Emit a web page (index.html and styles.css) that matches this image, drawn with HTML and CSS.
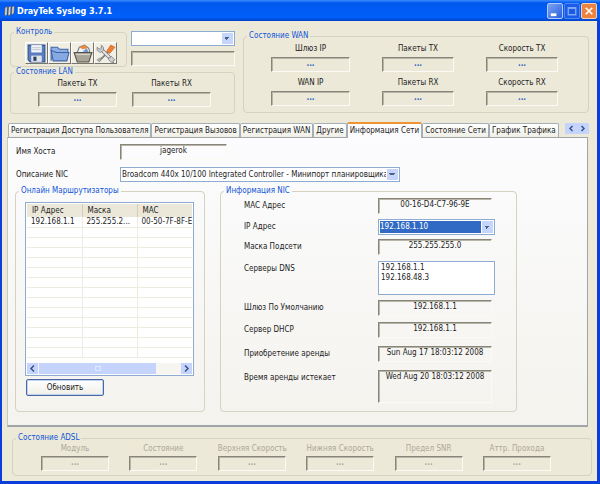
FILE: index.html
```html
<!DOCTYPE html>
<html lang="ru">
<head>
<meta charset="utf-8">
<title>DrayTek Syslog 3.7.1</title>
<link rel="stylesheet" href="styles.css">
</head>
<body>
<div class="window">
  <header class="titlebar">
    <svg class="app-icon" viewBox="0 0 11 12"><path d="M1 2.500l2.500-1L3 10l-2 1-.5-2zM4.500 2l2.500-1-.5 8.500-2 1.500-.5-2zM8 1.500l2.500-.5-.5 7-2 2-.5-2z" fill="#d6d0c2" stroke="#34405c" stroke-width=".5"/></svg>
    <h1>DrayTek Syslog 3.7.1</h1>
    <div class="caption-buttons">
      <button class="cap" aria-label="Свернуть"><svg viewBox="0 0 15 15"><path d="M3 10h6v3H3z" fill="#fff"/></svg></button>
      <button class="cap cap-off" aria-label="Развернуть" disabled><svg viewBox="0 0 15 15"><path d="M3.500 4h8v7.500h-8zM3 4.500h9" fill="none" stroke="#7fa8f2" stroke-width="1.500"/></svg></button>
      <button class="cap cap-close" aria-label="Закрыть"><svg viewBox="0 0 15 15"><path d="M4 4l7 7M11 4l-7 7" stroke="#fff" stroke-width="1.800"/></svg></button>
    </div>
  </header>

  <main class="client">
    <section class="top">
      <div class="top-left">
        <div class="control-row">
          <fieldset class="control">
            <legend>Контроль</legend>
            <div class="tools">
              <button aria-label="Сохранить"><svg viewBox="0 0 20 20"><path d="M2 2h16v16H4l-2-2z" fill="#5b7dc0" stroke="#31508f"/><path d="M5 2h10v7H5z" fill="#f4f6fa"/><path d="M6 4.500h8M6 6.500h8" stroke="#b9c2d2"/><path d="M5 12h10v6H5z" fill="#dfe3ea"/><path d="M7 13h3v4H7z" fill="#2d3f66"/></svg></button>
              <button aria-label="Открыть"><svg viewBox="0 0 20 20"><path d="M2 17V4h6l2 2h8v3" fill="#8fb0e6" stroke="#3d62a8"/><path d="M4 17L2 7l5 2h12l-2 8z" fill="#86a9e2" stroke="#3d62a8"/></svg></button>
              <button aria-label="Корзина"><svg viewBox="0 0 20 20"><path d="M5 9l2-5 5-2 4 3 1 4z" fill="#f2f5fb" stroke="#777"/><path d="M7 4l5-2 3 3-5 1z" fill="#ee8b3c"/><path d="M10 8l4-3 2 4z" fill="#6f94d8"/><path d="M2 9h17l-3 9H5z" fill="#a8a498" stroke="#55524a"/><path d="M4 11h13" stroke="#d8d5cb"/></svg></button>
              <button aria-label="Настройки"><svg viewBox="0 0 20 20"><path d="M4 17L13 8" stroke="#77777a" stroke-width="1.500"/><path d="M11 8l4-6 4 2-5 6z" fill="#ee7f35" stroke="#c6601f" stroke-width=".6"/><path d="M5 5l10 10" stroke="#77777a" stroke-width="3.500"/><path d="M5 5l10 10" stroke="#e4e4e4" stroke-width="2"/><path d="M2 4v3l3 2 3-2V4L6 2v3L5 6 3 5z" fill="#d0d0d2" stroke="#77777a" stroke-width=".7"/><path d="M13 14l3-1 3 3-2 1 1 2-3-1-2-2z" fill="#d0d0d2" stroke="#77777a" stroke-width=".7"/><path d="M2 16l3-2 1 1-2 3z" fill="#bbb" stroke="#666" stroke-width=".5"/></svg></button>
            </div>
          </fieldset>
          <div class="device">
            <select class="combo" aria-label="Устройство"><option></option></select>
            <output class="inset" aria-label="Адрес устройства"></output>
          </div>
        </div>
        <fieldset class="lan">
          <legend>Состояние LAN</legend>
          <div class="meters lan-meters">
            <div class="meter"><span>Пакеты TX</span><output class="inset">...</output></div>
            <div class="meter"><span>Пакеты RX</span><output class="inset">...</output></div>
          </div>
        </fieldset>
      </div>
      <fieldset class="wan">
        <legend>Состояние WAN</legend>
        <div class="meters wan-meters">
          <div class="meter"><span>Шлюз IP</span><output class="inset">...</output></div>
          <div class="meter"><span>Пакеты TX</span><output class="inset">...</output></div>
          <div class="meter"><span>Скорость TX</span><output class="inset">...</output></div>
          <div class="meter"><span>WAN IP</span><output class="inset">...</output></div>
          <div class="meter"><span>Пакеты RX</span><output class="inset">...</output></div>
          <div class="meter"><span>Скорость RX</span><output class="inset">...</output></div>
        </div>
      </fieldset>
    </section>

    <nav class="tabs">
      <button class="tab">Регистрация Доступа Пользователя</button>
      <button class="tab">Регистрация Вызовов</button>
      <button class="tab">Регистрация WAN</button>
      <button class="tab">Другие</button>
      <button class="tab active">Информация Сети</button>
      <button class="tab">Состояние Сети</button>
      <button class="tab">График Трафика</button>
      <div class="tab-scroll">
        <button aria-label="Назад"><svg viewBox="0 0 12 11"><path d="M7.500 3L5 5.500 7.500 8" /></svg></button>
        <button aria-label="Вперёд"><svg viewBox="0 0 12 11"><path d="M4.500 3L7 5.500 4.500 8" /></svg></button>
      </div>
    </nav>

    <section class="page">
      <div class="form">
        <label for="host">Имя Хоста</label>
        <output id="host" class="inset host">jagerok</output>
        <label for="nic">Описание NIC</label>
        <select id="nic" class="combo nic"><option>Broadcom 440x 10/100 Integrated Controller - Минипорт планировщика пакетов</option></select>
      </div>
      <div class="panels">
        <fieldset class="routers">
          <legend>Онлайн Маршрутизаторы</legend>
          <div class="list">
            <table>
              <thead><tr><th>IP Адрес</th><th>Маска</th><th>MAC</th></tr></thead>
              <tbody>
                <tr><td>192.168.1.1</td><td>255.255.2...</td><td>00-50-7F-8F-E</td></tr>
                <tr><td></td><td></td><td></td></tr><tr><td></td><td></td><td></td></tr>
                <tr><td></td><td></td><td></td></tr><tr><td></td><td></td><td></td></tr>
                <tr><td></td><td></td><td></td></tr><tr><td></td><td></td><td></td></tr>
                <tr><td></td><td></td><td></td></tr><tr><td></td><td></td><td></td></tr>
                <tr><td></td><td></td><td></td></tr><tr><td></td><td></td><td></td></tr>
                <tr><td></td><td></td><td></td></tr><tr><td></td><td></td><td></td></tr>
                <tr><td></td><td></td><td></td></tr>
              </tbody>
            </table>
            <div class="scrollbar">
              <button aria-label="Влево"><svg viewBox="0 0 11 11"><path d="M7 2.500L4 5.500l3 3"/></svg></button>
              <div class="track"><div class="thumb"><i></i></div></div>
              <button aria-label="Вправо"><svg viewBox="0 0 11 11"><path d="M4 2.500l3 3-3 3"/></svg></button>
            </div>
          </div>
          <button class="refresh">Обновить</button>
        </fieldset>
        <fieldset class="info">
          <legend>Информация NIC</legend>
          <div class="info-grid">
            <label for="mac">MAC Адрес</label><output id="mac" class="inset">00-16-D4-C7-96-9E</output>
            <label for="ip">IP Адрес</label><select id="ip" class="combo picked"><option>192.168.1.10</option></select>
            <label for="mask">Маска Подсети</label><output id="mask" class="inset">255.255.255.0</output>
            <label for="dns">Серверы DNS</label><textarea id="dns" readonly>192.168.1.1
192.168.48.3</textarea>
            <label for="gw">Шлюз По Умолчанию</label><output id="gw" class="inset">192.168.1.1</output>
            <label for="dhcp">Сервер DHCP</label><output id="dhcp" class="inset">192.168.1.1</output>
            <label for="got">Приобретение аренды</label><output id="got" class="inset">Sun Aug 17 18:03:12 2008</output>
            <label for="exp">Время аренды истекает</label><output id="exp" class="inset tall">Wed Aug 20 18:03:12 2008</output>
          </div>
        </fieldset>
      </div>
    </section>

    <fieldset class="adsl">
      <legend>Состояние ADSL</legend>
      <div class="meters adsl-meters">
        <div class="meter"><span>Модуль</span><output class="inset">...</output></div>
        <div class="meter"><span>Состояние</span><output class="inset">...</output></div>
        <div class="meter"><span>Верхняя Скорость</span><output class="inset">...</output></div>
        <div class="meter"><span>Нижняя Скорость</span><output class="inset">...</output></div>
        <div class="meter"><span>Предел SNR</span><output class="inset">...</output></div>
        <div class="meter"><span>Аттр. Прохода</span><output class="inset">...</output></div>
      </div>
    </fieldset>
  </main>
</div>
</body>
</html>
```
FILE: styles.css
```css
* { box-sizing: border-box; }

body {
  margin: 0;
  background: #ece9d8;
  font: 8px/10px "DejaVu Sans Condensed", "DejaVu Sans", sans-serif;
  color: #1c1c1c;
}

button, select, textarea, output {
  font: inherit;
  color: inherit;
  margin: 0;
  padding: 0;
}

svg { display: block; }

.window {
  min-height: 100vh;
  border: solid #0a3fdc;
  border-width: 0 3px 3px 2px;
  display: flex;
  flex-direction: column;
}

.titlebar {
  display: flex;
  align-items: center;
  height: 21px;
  margin: 0 -3px 0 -2px;
  padding: 1px 3px 0 4px;
  gap: 2px;
  background: linear-gradient(#3a8bff 0, #0058ee 3px, #0060fa 17px, #0040c8 21px);
}
.app-icon { width: 11px; height: 12px; }
.titlebar h1 {
  flex: 1;
  margin: 0;
  font-size: 9px;
  line-height: 14px;
  font-weight: bold;
  color: #fff;
}
.caption-buttons { display: flex; gap: 1px; }
.cap {
  width: 16px;
  height: 16px;
  border: 1px solid #b4cbfa;
  border-radius: 2px;
  background: linear-gradient(135deg, #7ba3f5, #2a5fd8);
}
.cap-off { border-color: #4b86f4; background: #1a5ce8; }
.cap-close { border-color: #f6d0b0; background: #ec8440; }

.client { flex: 1; padding: 6px 5px 2px; }

fieldset {
  min-width: 0;
  margin: 0;
  padding: 0;
  border: 1px solid #d5d2bf;
  border-radius: 4px;
}
legend {
  margin-left: 3px;
  padding: 0 2px;
  color: #0f55d8;
}

.inset {
  display: block;
  height: 15px;
  padding-top: 1px;
  border: 1px solid #fbfaf4;
  border-top: 1px solid #88857a;
  border-left: 1px solid #88857a;
  box-shadow: inset 1px 1px #b8b5a6;
  text-align: center;
  white-space: nowrap;
}

.combo {
  appearance: none;
  display: block;
  width: 100%;
  height: 15px;
  padding: 0 13px 0 1px;
  border: 1px solid #8eabd0;
  border-radius: 0;
  color: #1c1c1c;
  background:
    linear-gradient(45deg, transparent 50%, #4d6185 50%) right 7px top 5px / 3px 3px no-repeat,
    linear-gradient(-45deg, transparent 50%, #4d6185 50%) right 4px top 5px / 3px 3px no-repeat,
    linear-gradient(#c6d5fc, #c6d5fc) right 1px top 1px / 11px 11px no-repeat,
    #fff;
}

.top { display: flex; gap: 8px; padding: 0 3px; }
.top-left { width: 225px; }
.control-row { display: flex; gap: 4px; }
.control { width: 117px; height: 40px; }
.tools { display: flex; padding: 5px 0 0 14px; }
.tools button {
  width: 23px;
  height: 22px;
  border: 1px solid #fff;
  border-right-color: #77756c;
  border-bottom-color: #77756c;
  background: #f1efe4;
}
.device { flex: 1; display: flex; flex-direction: column; gap: 5px; padding-top: 4px; }
.lan { height: 47px; }
.wan { flex: 1; height: 82px; margin-top: 4px; }

.meters { display: grid; }
.meter span { display: block; text-align: center; white-space: nowrap; }
.meter .inset { margin-top: 3px; color: #2f62c4; font-weight: bold; }
.lan-meters { grid-template-columns: 79px 79px; gap: 15px; padding: 2px 27px; }
.wan-meters { grid-template-columns: 79px 72px 72px; gap: 6px 32px; padding: 3px 27px; }

.tabs { display: flex; align-items: flex-end; padding: 0 3px 0 1px; margin-top: 8px; }
.tab {
  height: 14px;
  padding: 0 2px;
  border: 1px solid #a3b0b8;
  border-bottom: 0;
  border-radius: 2px 2px 0 0;
  background: linear-gradient(#fff, #f0efe6);
  white-space: nowrap;
}
.tab.active {
  height: 16px;
  margin-bottom: -1px;
  border-top: 2px solid #ef9435;
  background: #fcfcfe;
  z-index: 1;
}
.tab-scroll { display: flex; margin: 0 0 3px auto; }
.tab-scroll button { width: 12px; height: 11px; border: 0; background: #c4d4fc; }
.tab-scroll path, .scrollbar path { fill: none; stroke: #3c5284; stroke-width: 1.5; }

.page {
  margin-right: 4px;
  padding: 6px 7px 13px;
  border: 1px solid #a0a6a8;
  border-left-color: #c4c8ca;
  border-bottom-width: 2px;
  background: linear-gradient(#fcfcfe, #f4f3ee);
}
.form {
  display: grid;
  grid-template-columns: 105px 280px;
  row-gap: 7px;
  align-items: center;
}
.form label { padding-left: 1px; }
.host { width: 107px; height: 16px; }
.panels { display: flex; gap: 15px; margin-top: 4px; }
.routers { width: 190px; height: 226px; }
.info { width: 297px; }

.list {
  width: 169px;
  margin: 6px 0 0 9px;
  border: 1px solid #8eabd0;
  padding: 1px;
  background: #fff;
  overflow: hidden;
}
table { width: 100%; table-layout: fixed; border-collapse: collapse; }
th {
  height: 13px;
  padding: 0 0 0 5px;
  text-align: left;
  font-weight: normal;
  background: #ebe8d9;
  border-right: 1px solid #d0cdbc;
}
td {
  height: 10px;
  padding: 0 0 0 4px;
  border: solid #eeecdf;
  border-width: 0 1px 1px 0;
  white-space: nowrap;
}
th:last-child, td:last-child { border-right: 0; }
.scrollbar { display: flex; height: 11px; margin-top: 5px; background: #f6f5f0; }
.scrollbar button { width: 11px; border: 0; background: #c4d4fc; }
.track { flex: 1; padding: 0 1px; }
.thumb { width: 83%; height: 11px; padding: 3px 0; background: #c4d4fc; }
.thumb i { display: block; width: 6px; height: 5px; margin: 0 auto; border: 1px solid #dfe8ff; }
.refresh {
  display: block;
  width: 78px;
  height: 17px;
  margin: 3px 0 0 10px;
  border: 1px solid #4a68a4;
  border-radius: 2px;
  box-shadow: inset 0 0 0 1px #c0d2f2;
  background: linear-gradient(#fff, #f0efe8);
}

.info-grid {
  display: grid;
  grid-template-columns: 134px 114px;
  grid-template-rows: 21px 20px 22px 39px 22px 24px 24px 33px;
  align-items: start;
  padding: 2px 0 0 23px;
}
.info-grid label { padding-top: 3px; }
.info-grid .inset { height: 16px; }
.info-grid .tall { height: 33px; }
.info-grid .combo { width: 117px; height: 16px; }
.picked {
  color: #fff;
  background:
    linear-gradient(45deg, transparent 50%, #4d6185 50%) right 7px top 6px / 3px 3px no-repeat,
    linear-gradient(-45deg, transparent 50%, #4d6185 50%) right 4px top 6px / 3px 3px no-repeat,
    linear-gradient(#c6d5fc, #c6d5fc) right 1px top 1px / 11px 12px no-repeat,
    linear-gradient(#316ac5, #316ac5) left 1px top 1px / 101px 12px no-repeat,
    #fff;
}
textarea {
  width: 117px;
  height: 34px;
  padding: 1px 2px;
  border: 1px solid #8eabd0;
  background: #fff;
  resize: none;
  overflow: hidden;
}

.adsl { margin: 6px 0 0 5px; height: 43px; }
.adsl-meters {
  grid-template-columns: repeat(6, 68px);
  justify-content: space-between;
  padding: 1px 40px 0 28px;
}
.adsl .meter, .adsl .inset { color: #aca899; }
.adsl .inset { margin-top: 2px; }
```
